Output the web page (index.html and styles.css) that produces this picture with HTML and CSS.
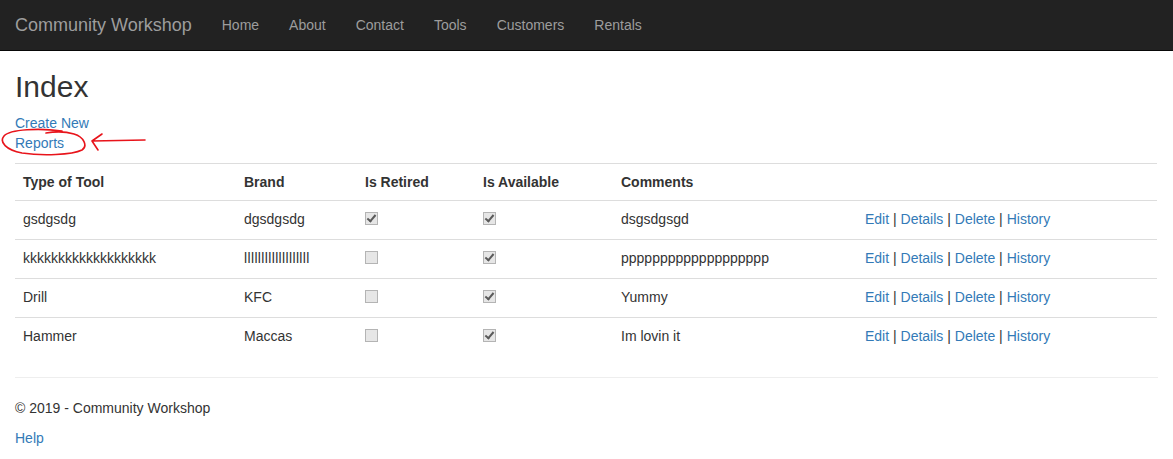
FILE: index.html
```html
<!DOCTYPE html>
<html>
<head>
<meta charset="utf-8">
<title>Index - Community Workshop</title>
<link rel="stylesheet" href="styles.css">
</head>
<body>
<nav class="navbar">
  <a class="brand" href="#">Community Workshop</a>
  <ul class="nav">
    <li><a href="#">Home</a></li>
    <li><a href="#">About</a></li>
    <li><a href="#">Contact</a></li>
    <li><a href="#">Tools</a></li>
    <li><a href="#">Customers</a></li>
    <li><a href="#">Rentals</a></li>
  </ul>
</nav>
<div class="body-content">
  <h2 class="title">Index</h2>
  <p class="actions">
    <a href="#">Create New</a><br>
    <a href="#">Reports</a>
  </p>
  <svg class="annotation" width="160" height="40" viewBox="0 0 160 40">
    <path d="M62 6 C40 3 10 4 4 11 C-1 17 6 25 22 28 C42 31 72 30 82 25 C88 21 84 12 74 9 C64 6 52 7 46 8" fill="none" stroke="#e8141b" stroke-width="1.6" stroke-linecap="round"/>
    <path d="M92 16 L145 15 M92 16 L102 9 M92 16 L98 25" fill="none" stroke="#e8141b" stroke-width="1.6" stroke-linecap="round"/>
  </svg>
  <table class="table">
    <colgroup>
      <col class="c1"><col class="c2"><col class="c3"><col class="c4"><col class="c5"><col class="c6">
    </colgroup>
    <tr class="head">
      <th>Type of Tool</th>
      <th>Brand</th>
      <th>Is Retired</th>
      <th>Is Available</th>
      <th>Comments</th>
      <th></th>
    </tr>
    <tr>
      <td>gsdgsdg</td>
      <td>dgsdgsdg</td>
      <td><span class="cb checked"></span></td>
      <td><span class="cb checked"></span></td>
      <td>dsgsdgsgd</td>
      <td class="links"><a href="#">Edit</a> | <a href="#">Details</a> | <a href="#">Delete</a> | <a href="#">History</a></td>
    </tr>
    <tr>
      <td>kkkkkkkkkkkkkkkkkkk</td>
      <td class="wide">lllllllllllllllllll</td>
      <td><span class="cb"></span></td>
      <td><span class="cb checked"></span></td>
      <td>ppppppppppppppppppp</td>
      <td class="links"><a href="#">Edit</a> | <a href="#">Details</a> | <a href="#">Delete</a> | <a href="#">History</a></td>
    </tr>
    <tr>
      <td>Drill</td>
      <td>KFC</td>
      <td><span class="cb"></span></td>
      <td><span class="cb checked"></span></td>
      <td>Yummy</td>
      <td class="links"><a href="#">Edit</a> | <a href="#">Details</a> | <a href="#">Delete</a> | <a href="#">History</a></td>
    </tr>
    <tr>
      <td>Hammer</td>
      <td>Maccas</td>
      <td><span class="cb"></span></td>
      <td><span class="cb checked"></span></td>
      <td>Im lovin it</td>
      <td class="links"><a href="#">Edit</a> | <a href="#">Details</a> | <a href="#">Delete</a> | <a href="#">History</a></td>
    </tr>
  </table>
  <hr class="rule">
  <footer class="footer">
    <p class="copy">&copy; 2019 - Community Workshop</p>
    <p class="help"><a href="#">Help</a></p>
  </footer>
</div>
</body>
</html>
```
FILE: styles.css
```css
* { box-sizing: border-box; }
html, body { margin: 0; padding: 0; }
body {
  font-family: "Liberation Sans", Arial, Helvetica, sans-serif;
  font-size: 14px;
  line-height: 20px;
  color: #333;
  background: #fff;
}
a { color: #337ab7; text-decoration: none; }

.navbar {
  height: 51px;
  background: #222;
  border-bottom: 1px solid #080808;
  display: flex;
  align-items: center;
}
.brand {
  color: #9d9d9d;
  font-size: 18px;
  line-height: 20px;
  padding: 15px;
}
.nav {
  list-style: none;
  margin: 0;
  padding: 0;
  display: flex;
}
.nav a {
  display: block;
  color: #9d9d9d;
  padding: 15px;
  line-height: 20px;
}

.body-content {
  padding: 1px 15px 0;
  position: relative;
}
.title {
  font-size: 30px;
  font-weight: 500;
  line-height: 33px;
  margin: 18px 0 10px;
}
.actions { margin: 0 0 10px; }

.annotation {
  position: absolute;
  left: 0;
  top: 74px;
  pointer-events: none;
}

.table {
  width: 1142px;
  border-collapse: collapse;
  border-spacing: 0;
  table-layout: fixed;
  margin-bottom: 20px;
}
.c1 { width: 221px; }
.c2 { width: 121px; }
.c3 { width: 118px; }
.c4 { width: 138px; }
.c5 { width: 244px; }
.c6 { width: 300px; }
.table th, .table td {
  text-align: left;
  vertical-align: top;
  padding: 8px;
  line-height: 20px;
  border-top: 1px solid #ddd;
  white-space: nowrap;
}
.table th { font-weight: bold; }
.table td { height: 39px; padding-top: 8px; padding-bottom: 10px; }
.table td.wide { letter-spacing: 0.35px; }

.cb {
  display: inline-block;
  width: 13px;
  height: 13px;
  margin-top: 3px;
  vertical-align: top;
  border: 1px solid #b4b4b4;
  background: #e6e6e6;
  position: relative;
}
.cb.checked::after {
  content: "";
  position: absolute;
  left: 3px;
  top: 0px;
  width: 3px;
  height: 7px;
  border: solid #5a5a5a;
  border-width: 0 2px 2px 0;
  transform: rotate(40deg);
}

.rule {
  margin: 0 0 20px;
  border: 0;
  border-top: 1px solid #eee;
  height: 0;
}
.footer p { margin: 0 0 10px; }
```
